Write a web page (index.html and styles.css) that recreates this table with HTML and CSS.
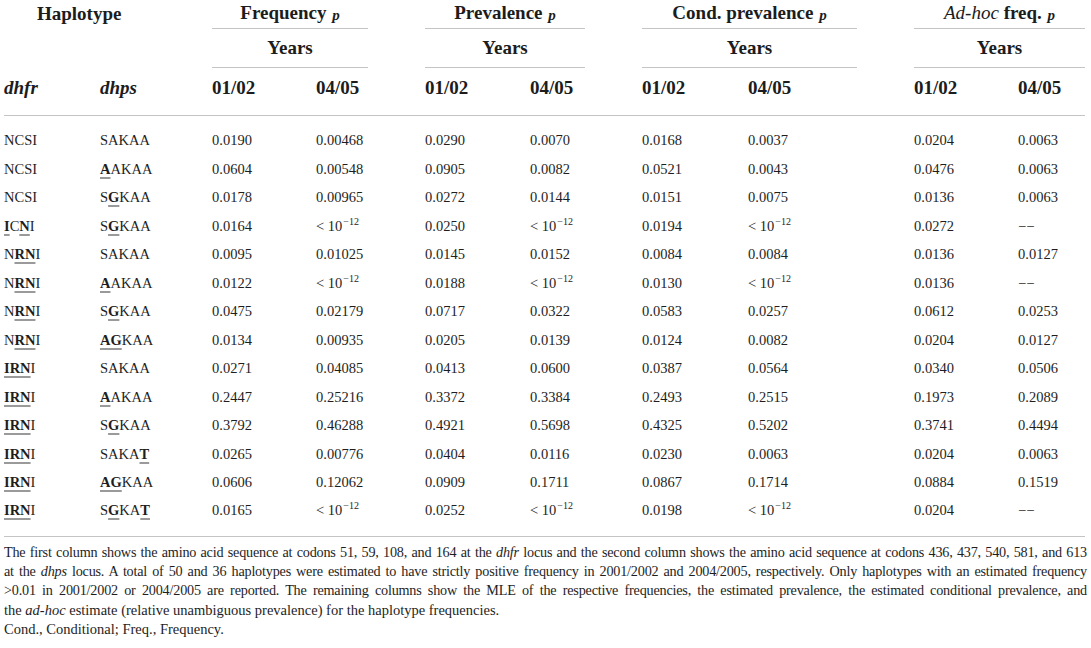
FILE: index.html
```html
<!DOCTYPE html>
<html lang="en">
<head>
<meta charset="utf-8">
<title>Haplotype frequencies</title>
<link rel="stylesheet" href="styles.css">
</head>
<body>
<table class="tbl">
  <colgroup>
    <col class="c-dhfr"><col class="c-dhps">
    <col class="c-f1"><col class="c-f2"><col class="c-gap">
    <col class="c-p1"><col class="c-p2"><col class="c-gap">
    <col class="c-c1"><col class="c-c2"><col class="c-gap">
    <col class="c-a1"><col class="c-a2">
  </colgroup>
  <thead>
    <tr class="h1">
      <th colspan="2" class="hap">Haplotype</th>
      <th colspan="2" class="grp">Frequency <i class="pv">p</i></th>
      <th></th>
      <th colspan="2" class="grp">Prevalence <i class="pv">p</i></th>
      <th></th>
      <th colspan="2" class="grp">Cond. prevalence <i class="pv">p</i></th>
      <th></th>
      <th colspan="2" class="grp"><i class="adhoc">Ad-hoc</i> freq. <i class="pv">p</i></th>
    </tr>
    <tr class="h2">
      <th colspan="2"></th>
      <th colspan="2" class="grp">Years</th>
      <th></th>
      <th colspan="2" class="grp">Years</th>
      <th></th>
      <th colspan="2" class="grp">Years</th>
      <th></th>
      <th colspan="2" class="grp">Years</th>
    </tr>
    <tr class="h3">
      <th><i>dhfr</i></th><th><i>dhps</i></th>
      <th>01/02</th><th>04/05</th><th></th>
      <th>01/02</th><th>04/05</th><th></th>
      <th>01/02</th><th>04/05</th><th></th>
      <th>01/02</th><th>04/05</th>
    </tr>
  </thead>
  <tbody>
    <tr><td>NCSI</td><td>SAKAA</td><td>0.0190</td><td>0.00468</td><td></td><td>0.0290</td><td>0.0070</td><td></td><td>0.0168</td><td>0.0037</td><td></td><td>0.0204</td><td>0.0063</td></tr>
    <tr><td>NCSI</td><td><b class="mut">A</b>AKAA</td><td>0.0604</td><td>0.00548</td><td></td><td>0.0905</td><td>0.0082</td><td></td><td>0.0521</td><td>0.0043</td><td></td><td>0.0476</td><td>0.0063</td></tr>
    <tr><td>NCSI</td><td>S<b class="mut">G</b>KAA</td><td>0.0178</td><td>0.00965</td><td></td><td>0.0272</td><td>0.0144</td><td></td><td>0.0151</td><td>0.0075</td><td></td><td>0.0136</td><td>0.0063</td></tr>
    <tr><td><b class="mut">I</b>C<b class="mut">N</b>I</td><td>S<b class="mut">G</b>KAA</td><td>0.0164</td><td>&lt; 10<sup>−12</sup></td><td></td><td>0.0250</td><td>&lt; 10<sup>−12</sup></td><td></td><td>0.0194</td><td>&lt; 10<sup>−12</sup></td><td></td><td>0.0272</td><td>−−</td></tr>
    <tr><td>N<b class="mut">RN</b>I</td><td>SAKAA</td><td>0.0095</td><td>0.01025</td><td></td><td>0.0145</td><td>0.0152</td><td></td><td>0.0084</td><td>0.0084</td><td></td><td>0.0136</td><td>0.0127</td></tr>
    <tr><td>N<b class="mut">RN</b>I</td><td><b class="mut">A</b>AKAA</td><td>0.0122</td><td>&lt; 10<sup>−12</sup></td><td></td><td>0.0188</td><td>&lt; 10<sup>−12</sup></td><td></td><td>0.0130</td><td>&lt; 10<sup>−12</sup></td><td></td><td>0.0136</td><td>−−</td></tr>
    <tr><td>N<b class="mut">RN</b>I</td><td>S<b class="mut">G</b>KAA</td><td>0.0475</td><td>0.02179</td><td></td><td>0.0717</td><td>0.0322</td><td></td><td>0.0583</td><td>0.0257</td><td></td><td>0.0612</td><td>0.0253</td></tr>
    <tr><td>N<b class="mut">RN</b>I</td><td><b class="mut">AG</b>KAA</td><td>0.0134</td><td>0.00935</td><td></td><td>0.0205</td><td>0.0139</td><td></td><td>0.0124</td><td>0.0082</td><td></td><td>0.0204</td><td>0.0127</td></tr>
    <tr><td><b class="mut">IRN</b>I</td><td>SAKAA</td><td>0.0271</td><td>0.04085</td><td></td><td>0.0413</td><td>0.0600</td><td></td><td>0.0387</td><td>0.0564</td><td></td><td>0.0340</td><td>0.0506</td></tr>
    <tr><td><b class="mut">IRN</b>I</td><td><b class="mut">A</b>AKAA</td><td>0.2447</td><td>0.25216</td><td></td><td>0.3372</td><td>0.3384</td><td></td><td>0.2493</td><td>0.2515</td><td></td><td>0.1973</td><td>0.2089</td></tr>
    <tr><td><b class="mut">IRN</b>I</td><td>S<b class="mut">G</b>KAA</td><td>0.3792</td><td>0.46288</td><td></td><td>0.4921</td><td>0.5698</td><td></td><td>0.4325</td><td>0.5202</td><td></td><td>0.3741</td><td>0.4494</td></tr>
    <tr><td><b class="mut">IRN</b>I</td><td>SAKA<b class="mut">T</b></td><td>0.0265</td><td>0.00776</td><td></td><td>0.0404</td><td>0.0116</td><td></td><td>0.0230</td><td>0.0063</td><td></td><td>0.0204</td><td>0.0063</td></tr>
    <tr><td><b class="mut">IRN</b>I</td><td><b class="mut">AG</b>KAA</td><td>0.0606</td><td>0.12062</td><td></td><td>0.0909</td><td>0.1711</td><td></td><td>0.0867</td><td>0.1714</td><td></td><td>0.0884</td><td>0.1519</td></tr>
    <tr><td><b class="mut">IRN</b>I</td><td>S<b class="mut">G</b>KA<b class="mut">T</b></td><td>0.0165</td><td>&lt; 10<sup>−12</sup></td><td></td><td>0.0252</td><td>&lt; 10<sup>−12</sup></td><td></td><td>0.0198</td><td>&lt; 10<sup>−12</sup></td><td></td><td>0.0204</td><td>−−</td></tr>
  </tbody>
</table>
<div class="notes">
  <p class="ln">The first column shows the amino acid sequence at codons 51, 59, 108, and 164 at the <i>dhfr</i> locus and the second column shows the amino acid sequence at codons 436, 437, 540, 581, and 613</p>
  <p class="ln">at the <i>dhps</i> locus. A total of 50 and 36 haplotypes were estimated to have strictly positive frequency in 2001/2002 and 2004/2005, respectively. Only haplotypes with an estimated frequency</p>
  <p class="ln">&gt;0.01 in 2001/2002 or 2004/2005 are reported. The remaining columns show the MLE of the respective frequencies, the estimated prevalence, the estimated conditional prevalence, and</p>
  <p class="ln last">the <i>ad-hoc</i> estimate (relative unambiguous prevalence) for the haplotype frequencies.</p>
  <p class="ln last">Cond., Conditional; Freq., Frequency.</p>
</div>
</body>
</html>
```

FILE: styles.css
```css
html, body {
  margin: 0;
  padding: 0;
  background: #ffffff;
}

body {
  padding: 0 4px;
  font-family: "Liberation Serif", "Times New Roman", serif;
  color: #1e1e1e;
}

.tbl {
  width: 1081px;
  table-layout: fixed;
  border-collapse: separate;
  border-spacing: 0;
}

.c-dhfr { width: 96px; }
.c-dhps { width: 112px; }
.c-f1 { width: 104px; }
.c-f2 { width: 52px; }
.c-gap { width: 57px; }
.c-p1 { width: 105px; }
.c-p2 { width: 55px; }
.c-c1 { width: 106px; }
.c-c2 { width: 109px; }
.c-a1 { width: 104px; }
.c-a2 { width: 67px; }

.tbl th {
  padding: 0;
  font-size: 19px;
  font-weight: bold;
  text-align: left;
  white-space: nowrap;
  line-height: 22px;
  color: #1c1c1c;
}

.h1 th {
  height: 29px;
  vertical-align: middle;
  padding-bottom: 1px;
  box-sizing: border-box;
}

.h1 .hap {
  padding-left: 33px;
}

.h1 .grp,
.h2 .grp {
  text-align: center;
  border-bottom: 1px solid #c4c4c4;
}

.h2 th {
  height: 39px;
  box-sizing: border-box;
  vertical-align: middle;
}

.h3 th {
  height: 48px;
  box-sizing: border-box;
  padding-bottom: 7px;
  vertical-align: middle;
  border-bottom: 1px solid #c4c4c4;
}

.pv {
  font-size: 15px;
  font-style: italic;
  vertical-align: -1px;
  margin-left: 1px;
}

.adhoc {
  font-weight: normal;
}

.tbl td {
  padding: 0;
  height: 28.5px;
  font-size: 14.5px;
  line-height: 18px;
  vertical-align: middle;
  white-space: nowrap;
  color: #1e1e1e;
}

.tbl tbody tr:first-child td {
  padding-top: 10px;
  height: 38.5px;
  box-sizing: border-box;
}

.tbl tbody tr:last-child td {
  padding-bottom: 12px;
  height: 40.5px;
  box-sizing: border-box;
  border-bottom: 1px solid #c4c4c4;
}

.mut {
  text-decoration: underline;
  text-decoration-color: #9a9a9a;
  text-decoration-thickness: 1.5px;
  text-underline-offset: 3px;
}

sup {
  font-size: 10px;
  line-height: 0;
  vertical-align: 6px;
  margin-left: 1px;
}

.notes {
  margin-top: 6px;
  font-size: 14.2px;
  line-height: 19.2px;
  letter-spacing: -0.2px;
  color: #1e1e1e;
}

.ln {
  margin: 0;
  white-space: nowrap;
  text-align: justify;
  text-align-last: justify;
}

.ln.last {
  text-align-last: left;
  letter-spacing: 0;
  font-size: 14.5px;
}
```
